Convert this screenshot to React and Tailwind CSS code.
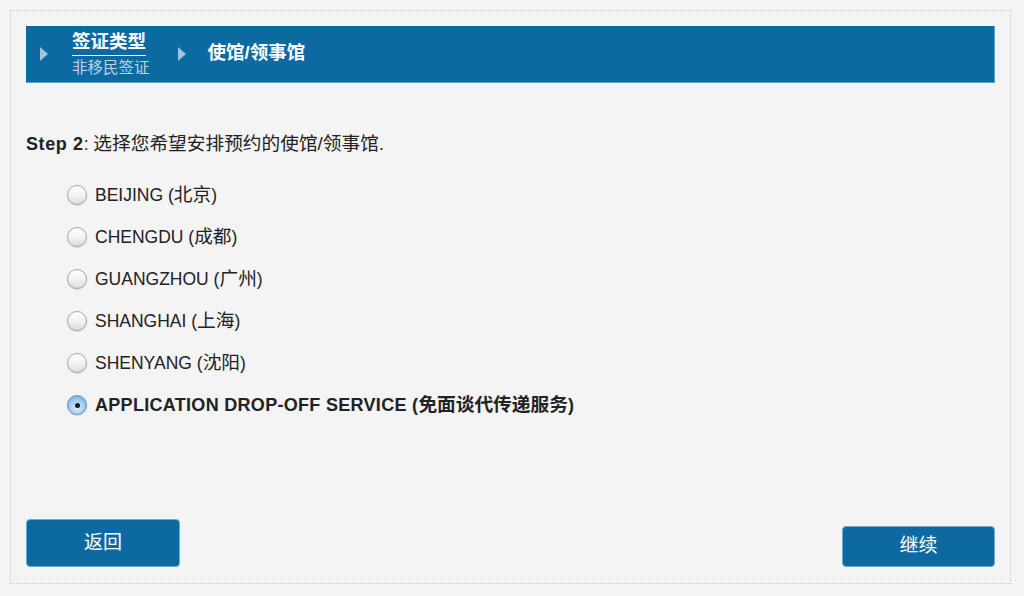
import React from 'react';

const options = [
  { name: 'BEIJING', cjk: '北京' },
  { name: 'CHENGDU', cjk: '成都' },
  { name: 'GUANGZHOU', cjk: '广州' },
  { name: 'SHANGHAI', cjk: '上海' },
  { name: 'SHENYANG', cjk: '沈阳' },
  { name: 'APPLICATION DROP-OFF SERVICE', cjk: '免面谈代传递服务', selected: true },
];

const Arrow = () => (
  <svg width="8" height="14" viewBox="0 0 8 14" className="shrink-0">
    <path d="M0 0 L8 7 L0 14 Z" fill="#9fc3e3" />
  </svg>
);

const Radio = ({ selected }) =>
  selected ? (
    <div className="w-[20px] h-[20px] shrink-0 rounded-full border border-[#6a8fb5] bg-[radial-gradient(circle_at_50%_65%,#dbeeff_0%,#9cc9f3_55%,#5d9bd8_100%)] flex items-center justify-center shadow-[0_1px_1px_rgba(0,0,0,0.15)]">
      <div className="w-[5px] h-[5px] rounded-full bg-[#1a1a1a]" />
    </div>
  ) : (
    <div className="w-[20px] h-[20px] shrink-0 rounded-full border border-[#a5a5a5] bg-[linear-gradient(to_bottom,#ffffff_0%,#f3f3f3_50%,#dcdcdc_100%)] shadow-[0_1px_1px_rgba(0,0,0,0.12)]" />
  );

export default function App() {
  return (
    <div
      className="w-[1024px] h-[596px] bg-[#f4f4f4] p-[10px] text-[#222]"
      style={{ fontFamily: '"Liberation Sans", Arial, "Noto Sans CJK SC", sans-serif' }}
    >
      <div className="w-[1001px] h-[574px] border border-dotted border-[#c8c8c8] px-[15px] pt-[15px] pb-[16px] flex flex-col">
        {/* header steps */}
        <div className="h-[57px] bg-[#0d6aa1] border-r border-b border-[#5a9fd0] flex items-center pl-[14px]">
          <Arrow />
          <div className="ml-[24px] flex flex-col items-start">
            <div className="text-white font-bold text-[18.5px] leading-[21px] pb-[3px] border-b border-white">签证类型</div>
            <div className="text-[#b9d2e8] text-[15.5px] leading-[20px] mt-[2px]">非移民签证</div>
          </div>
          <div className="ml-[28px]">
            <Arrow />
          </div>
          <div className="ml-[22px] text-white font-bold text-[18.5px] leading-[21px] mb-[4px]">使馆/领事馆</div>
        </div>

        <div className="mt-[50px] text-[17.5px] leading-[22px]">
          <span className="font-bold text-[18px] tracking-[0.6px]">Step 2</span>: <span className="text-[18.7px]">选择您希望安排预约的使馆/领事馆</span>.
        </div>

        <div className="mt-[29px] pl-[41px] flex flex-col gap-[20px]">
          {options.map((o) => (
            <div key={o.name} className="flex items-center h-[22px]">
              <Radio selected={o.selected} />
              <span
                className={`ml-[8px] leading-[22px] whitespace-nowrap ${
                  o.selected ? 'font-bold text-[18px] tracking-[0.3px]' : 'text-[17.5px]'
                }`}
              >
                {o.name} (<span className="text-[18.7px] tracking-normal">{o.cjk}</span>)
              </span>
            </div>
          ))}
        </div>

        <div className="mt-auto flex justify-between items-end">
          <button className="w-[154px] h-[48px] rounded-[4px] bg-[#0d6aa1] border border-[#6fa8d8] text-white text-[19px]">
            返回
          </button>
          <button className="w-[153px] h-[41px] rounded-[4px] bg-[#0d6aa1] border border-[#6fa8d8] text-white text-[19px]">
            继续
          </button>
        </div>
      </div>
    </div>
  );
}
